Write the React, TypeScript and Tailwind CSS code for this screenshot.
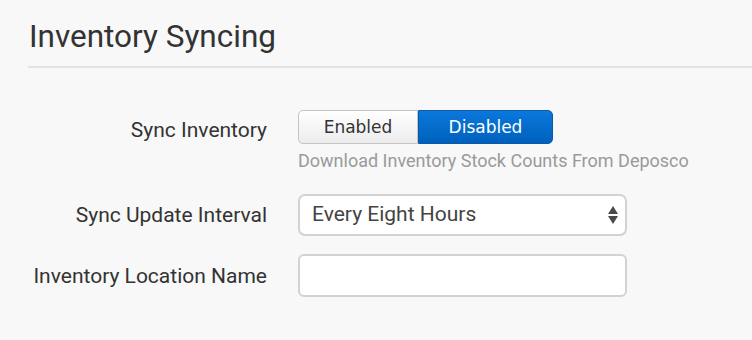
export default function App() {
  return (
    <div className="w-[752px] h-[340px] overflow-hidden bg-[#f8f8f8] font-['Roboto',sans-serif] text-[#333]">
      <div className="pl-[28px] pt-[16px]">
        <h2 className="pl-[1px] text-[31.5px] leading-[42px] font-normal text-[#333]">Inventory Syncing</h2>
        <div className="mt-[8px] h-[2px] bg-[#e3e3e3]" />
      </div>

      <div className="mt-[42px] flex flex-col">
        {/* Sync inventory */}
        <div className="flex">
          <label className="w-[267px] pt-[7px] text-right text-[21px] leading-[26px]">Sync Inventory</label>
          <div className="ml-[31px] flex flex-col">
            <div className="flex h-[34px] font-['DejaVu_Sans',sans-serif] text-[17px]">
              <button className="w-[120px] rounded-l-[5px] border border-[#c4c4c4] bg-gradient-to-b from-[#ffffff] to-[#ececec] pt-[1px] text-[#333]">
                Enabled
              </button>
              <button className="w-[135px] rounded-r-[5px] border border-[#0a5aa8] bg-gradient-to-b from-[#0b78dc] to-[#0061bd] pt-[1px] text-white">
                Disabled
              </button>
            </div>
            <p className="mt-[6px] text-[18px] leading-[22px] text-[#9a9a9a]">Download Inventory Stock Counts From Deposco</p>
          </div>
        </div>

        {/* Interval */}
        <div className="mt-[22px] flex items-center">
          <label className="w-[267px] text-right text-[21px] leading-[26px]">Sync Update Interval</label>
          <div className="ml-[31px] flex h-[42px] w-[329px] items-center justify-between rounded-[7px] border-2 border-[#d2d2d2] bg-white pl-[12px] pr-[6px] text-[21px]">
            <span className="text-[#444]">Every Eight Hours</span>
            <svg width="12" height="20" viewBox="0 0 12 20" className="fill-[#4a4a4a]">
              <path d="M6 1 L11 9 L1 9 Z" />
              <path d="M1 11 L11 11 L6 19 Z" />
            </svg>
          </div>
        </div>

        {/* Location name */}
        <div className="mt-[18px] flex items-center">
          <label className="w-[267px] text-right text-[21px] leading-[26px]">Inventory Location Name</label>
          <input className="ml-[31px] h-[43px] w-[329px] rounded-[6px] border-2 border-[#d2d2d2] bg-white px-[12px] text-[21px] outline-none" />
        </div>
      </div>
    </div>
  );
}
